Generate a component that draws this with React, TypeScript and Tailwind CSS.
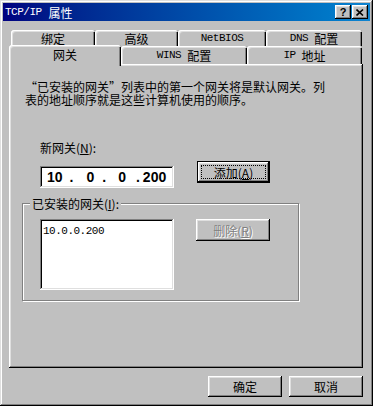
import React from 'react'

const raised =
  'bg-[#c0c0c0] shadow-[inset_-1px_-1px_#000,inset_1px_1px_#fff,inset_-2px_-2px_#808080,inset_2px_2px_#dfdfdf]'
const sunken =
  'bg-white shadow-[inset_-1px_-1px_#fff,inset_1px_1px_#808080,inset_-2px_-2px_#dfdfdf,inset_2px_2px_#000]'
const tabShadow =
  'shadow-[inset_1px_1px_#fff,inset_2px_2px_#dfdfdf,inset_-1px_0_#000,inset_-2px_0_#808080]'

const Latin: React.FC<{ children: React.ReactNode }> = ({ children }) => (
  <span className="font-['Liberation_Mono',monospace] text-[11px] tracking-[-0.5px]">{children}</span>
)

const Tab: React.FC<{ className: string; children: React.ReactNode }> = ({ className, children }) => (
  <div className={`flex items-center justify-center rounded-t-[3px] pt-[1px] ${tabShadow} ${className}`}>
    {children}
  </div>
)

const App: React.FC = () => {
  return (
    <div className="flex h-[406px] w-[373px] flex-col overflow-hidden bg-[#c0c0c0] p-[3px] font-['Noto_Sans_CJK_SC',sans-serif] text-[12px] leading-[13px] text-black shadow-[inset_-1px_-1px_#000,inset_1px_1px_#dfdfdf,inset_-2px_-2px_#808080,inset_2px_2px_#fff]">
      {/* 标题栏 */}
      <div className="flex h-[18px] items-center bg-linear-to-r from-[#000080] to-[#1084d0] pr-[2px] pl-[2px]">
        <span className="flex flex-1 items-center text-white">
          <Latin>TCP/IP</Latin>
          <span className="ml-[7px]">属性</span>
        </span>
        <div className={`flex h-[14px] w-[16px] items-center justify-center ${raised}`}>
          <span className="font-['Liberation_Sans',sans-serif] text-[11px] leading-none font-bold">?</span>
        </div>
        <div className={`ml-[1px] flex h-[14px] w-[16px] items-center justify-center ${raised}`}>
          <svg width="8" height="7" viewBox="0 0 8 7">
            <path d="M0.5 0.5 L7 6.5 M7 0.5 L0.5 6.5" stroke="#000" strokeWidth="1.6" />
          </svg>
        </div>
      </div>

      <div className="mt-[9px] flex flex-col pr-[7px] pl-[6px]">
        {/* 第一排标签 */}
        <div className="flex h-[16px] pl-[2px]">
          <Tab className="h-[16px] w-[84px]">绑定</Tab>
          <Tab className="h-[16px] w-[83px]">高级</Tab>
          <Tab className="h-[16px] w-[88px]">
            <Latin>NetBIOS</Latin>
          </Tab>
          <Tab className="h-[16px] w-[96px]">
            <Latin>DNS</Latin>
            <span className="ml-[6px]">配置</span>
          </Tab>
        </div>

        {/* 第二排标签 */}
        <div className="flex h-[18px] items-start">
          <div
            className={`relative z-10 -mt-[1px] flex h-[21px] w-[112px] items-start justify-center rounded-t-[3px] bg-[#c0c0c0] pt-[3px] ${tabShadow}`}
          >
            网关
          </div>
          <Tab className="h-[18px] w-[126px]">
            <Latin>WINS</Latin>
            <span className="ml-[6px]">配置</span>
          </Tab>
          <Tab className="h-[18px] w-[115px]">
            <Latin>IP</Latin>
            <span className="ml-[6px]">地址</span>
          </Tab>
        </div>

        {/* 面板 */}
        <div className={`flex h-[304px] flex-col items-start pl-[13px] ${raised}`}>
          <div className="mt-[16px] ml-[3px] flex flex-col whitespace-nowrap">
            <span className="h-[13px]">“已安装的网关”列表中的第一个网关将是默认网关。列</span>
            <span className="h-[13px]">表的地址顺序就是这些计算机使用的顺序。</span>
          </div>

          <div className="mt-[35px] ml-[18px]">
            新网关(<u>N</u>):
          </div>

          <div className="mt-[7px] ml-[18px] flex items-start">
            <div
              className={`mt-[5px] flex h-[22px] w-[134px] items-center font-['Liberation_Sans',sans-serif] text-[14px] font-bold ${sunken}`}
            >
              <span className="ml-[7px]">10</span>
              <span className="ml-[7px]">.</span>
              <span className="ml-[13px]">0</span>
              <span className="ml-[8px]">.</span>
              <span className="ml-[12px]">0</span>
              <span className="ml-[10px]">.</span>
              <span className="ml-[3px]">200</span>
            </div>
            <div className="ml-[23px] h-[22px] w-[73px] border border-black">
              <div className={`flex h-full w-full items-center justify-center p-[3px] ${raised}`}>
                <div className="flex h-full w-full items-center justify-center outline-1 -outline-offset-1 outline-black outline-dotted">
                  添加(<u>A</u>)
                </div>
              </div>
            </div>
          </div>

          {/* 已安装的网关 */}
          <div className="mt-[15px] flex h-[98px] w-[277px] flex-col items-start border border-[#808080] shadow-[inset_1px_1px_#fff,1px_1px_#fff]">
            <span className="-mt-[7px] ml-[7px] bg-[#c0c0c0] px-[2px]">
              已安装的网关(<u>I</u>):
            </span>
            <div className="mt-[9px] ml-[17px] flex items-start">
              <div className={`h-[71px] w-[134px] pt-[3px] pl-[3px] ${sunken}`}>
                <Latin>10.0.0.200</Latin>
              </div>
              <div
                className={`ml-[22px] flex h-[22px] w-[74px] items-center justify-center text-[#808080] [text-shadow:1px_1px_#fff] ${raised}`}
              >
                删除(<u>R</u>)
              </div>
            </div>
          </div>
        </div>

        {/* 底部按钮 */}
        <div className="mt-[8px] flex justify-end gap-[7px]">
          <div className={`flex h-[21px] w-[74px] items-center justify-center ${raised}`}>确定</div>
          <div className={`flex h-[21px] w-[74px] items-center justify-center ${raised}`}>取消</div>
        </div>
      </div>
    </div>
  )
}

export default App
